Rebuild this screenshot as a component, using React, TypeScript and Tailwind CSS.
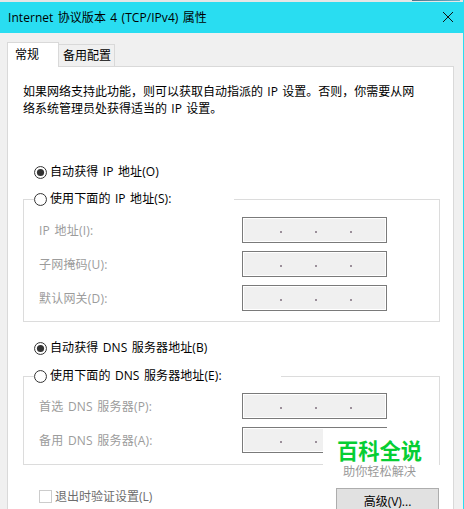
import { ReactNode } from "react"

function Radio({ checked = false }: { checked?: boolean }) {
  return (
    <svg className="size-[13px] shrink-0" viewBox="0 0 13 13">
      <circle cx="6.5" cy="6.5" r="5.95" fill="#fff" stroke="#333" strokeWidth="1" />
      {checked && <circle cx="6.5" cy="6.5" r="3.6" fill="#333" />}
    </svg>
  )
}

function RadioLabel({ checked, children }: { checked?: boolean; children: ReactNode }) {
  return (
    <label className="flex h-[19px] items-center">
      <Radio checked={checked} />
      <span className="-mt-[2px] ml-[3px] whitespace-nowrap tracking-[0.1px]">{children}</span>
    </label>
  )
}

// Disabled IPv4 box, only the separators between the octets are shown
function IpInput() {
  return (
    <div className="flex h-[26px] w-[145px] shrink-0 border border-[#7a7a7a] bg-white p-px">
      <div className="flex w-full items-start gap-[33px] bg-[#f0f0f0] pl-[36px] pt-[12px]">
        <i className="h-[2px] w-[2px] bg-[#9b8f9a]" />
        <i className="h-[2px] w-[2px] bg-[#9b8f9a]" />
        <i className="h-[2px] w-[2px] bg-[#9b8f9a]" />
      </div>
    </div>
  )
}

function Field({ label }: { label: string }) {
  return (
    <div className="flex h-[26px] items-center">
      <span className="w-[203px] shrink-0 whitespace-nowrap pt-[2px] tracking-[0.2px] text-[#9c9c9c]">{label}</span>
      <IpInput />
    </div>
  )
}

function Group({
  title,
  legendClass,
  fieldsClass,
  className,
  fields,
}: {
  title: string
  legendClass: string
  fieldsClass: string
  className: string
  fields: string[]
}) {
  return (
    <div className={`ml-[15px] w-[417px] border border-[#dcdcdc] ${className}`}>
      <div className={`-mt-[10px] ml-[10px] bg-white ${legendClass}`}>
        <RadioLabel>{title}</RadioLabel>
      </div>
      <div className={`flex flex-col gap-2 pl-[15px] ${fieldsClass}`}>
        {fields.map((f) => (
          <Field key={f} label={f} />
        ))}
      </div>
    </div>
  )
}

export default function App() {
  return (
    <div className="relative flex h-[509px] w-[464px] flex-col overflow-hidden border-r border-[#29ddf1] bg-[#f0f0f0] font-['Open_Sans','Noto_Sans_CJK_SC',sans-serif] text-[12px] leading-[18px] text-black [word-spacing:1.2px]">
      <div className="flex h-[2px] shrink-0 bg-[#e6e6e6]">
        <div className="ml-[412px] h-px w-[48px] bg-linear-to-r from-[#4f7388] to-[#62b4cc]" />
      </div>

      <header className="flex h-[31px] shrink-0 items-center justify-between bg-[#29ddf1] pl-2 pr-[9px]">
        <h1 className="whitespace-nowrap text-[12px] tracking-[0.05px]">Internet 协议版本 4 (TCP/IPv4) 属性</h1>
        <svg className="-mt-px size-[12px]" viewBox="0 0 12 12" stroke="#111" strokeWidth="1">
          <path d="M1 1 L11 11 M11 1 L1 11" />
        </svg>
      </header>

      <div className="ml-[7px] mt-[9px] flex h-[24px] shrink-0 items-end">
        <div className="z-10 -mb-px h-[25px] w-[52px] border border-b-0 border-[#d9d9d9] bg-white pl-[7px] pt-[3px]">常规</div>
        <div className="h-[22px] w-[56px] border border-b-0 border-l-0 border-[#d9d9d9] pl-[4px] pt-[2px]">备用配置</div>
      </div>

      <main className="ml-[7px] h-[443px] w-[447px] shrink-0 border border-b-0 border-[#d9d9d9] bg-white">
        <p className="ml-[15px] mt-[16px] whitespace-nowrap leading-[17px]">
          如果网络支持此功能，则可以获取自动指派的 IP 设置。否则，你需要从网
          <br />
          络系统管理员处获得适当的 IP 设置。
        </p>

        <div className="ml-[26px] mt-[46px]">
          <RadioLabel checked>自动获得 IP 地址(O)</RadioLabel>
        </div>
        <Group
          title="使用下面的 IP 地址(S):"
          legendClass="w-[200px]"
          fieldsClass="mt-[8px]"
          className="mt-[17px] h-[123px]"
          fields={["IP 地址(I):", "子网掩码(U):", "默认网关(D):"]}
        />

        <div className="ml-[26px] mt-[17px]">
          <RadioLabel checked>自动获得 DNS 服务器地址(B)</RadioLabel>
        </div>
        <Group
          title="使用下面的 DNS 服务器地址(E):"
          legendClass="w-[247px]"
          fieldsClass="mt-[7px]"
          className="mt-[18px] h-[89px]"
          fields={["首选 DNS 服务器(P):", "备用 DNS 服务器(A):"]}
        />

        <div className="flex items-start">
          <label className="ml-[31px] mt-[22px] flex h-[18px] items-center text-[#6d6d6d]">
            <span className="size-[13px] border border-[#cccccc] bg-white" />
            <span className="ml-[3px] pt-px">退出时验证设置(L)</span>
          </label>
          <button className="ml-auto mr-[14px] mt-[23px] h-[28px] w-[103px] border border-[#adadad] bg-[#e1e1e1]">
            高级(V)...
          </button>
        </div>
      </main>

      {/* Site badge floating over the dialog */}
      <div className="absolute left-[323px] top-[428px] h-[56px] w-[116px] bg-white pr-[3px] text-center font-['Noto_Sans_CJK_SC',sans-serif]">
        <div className="pt-[10px] text-[21.3px] font-bold leading-[24px] text-[#06ce33]">百科全说</div>
        <div className="pt-px text-[12.2px] leading-[16px] text-[#999]">助你轻松解决</div>
      </div>
    </div>
  )
}
